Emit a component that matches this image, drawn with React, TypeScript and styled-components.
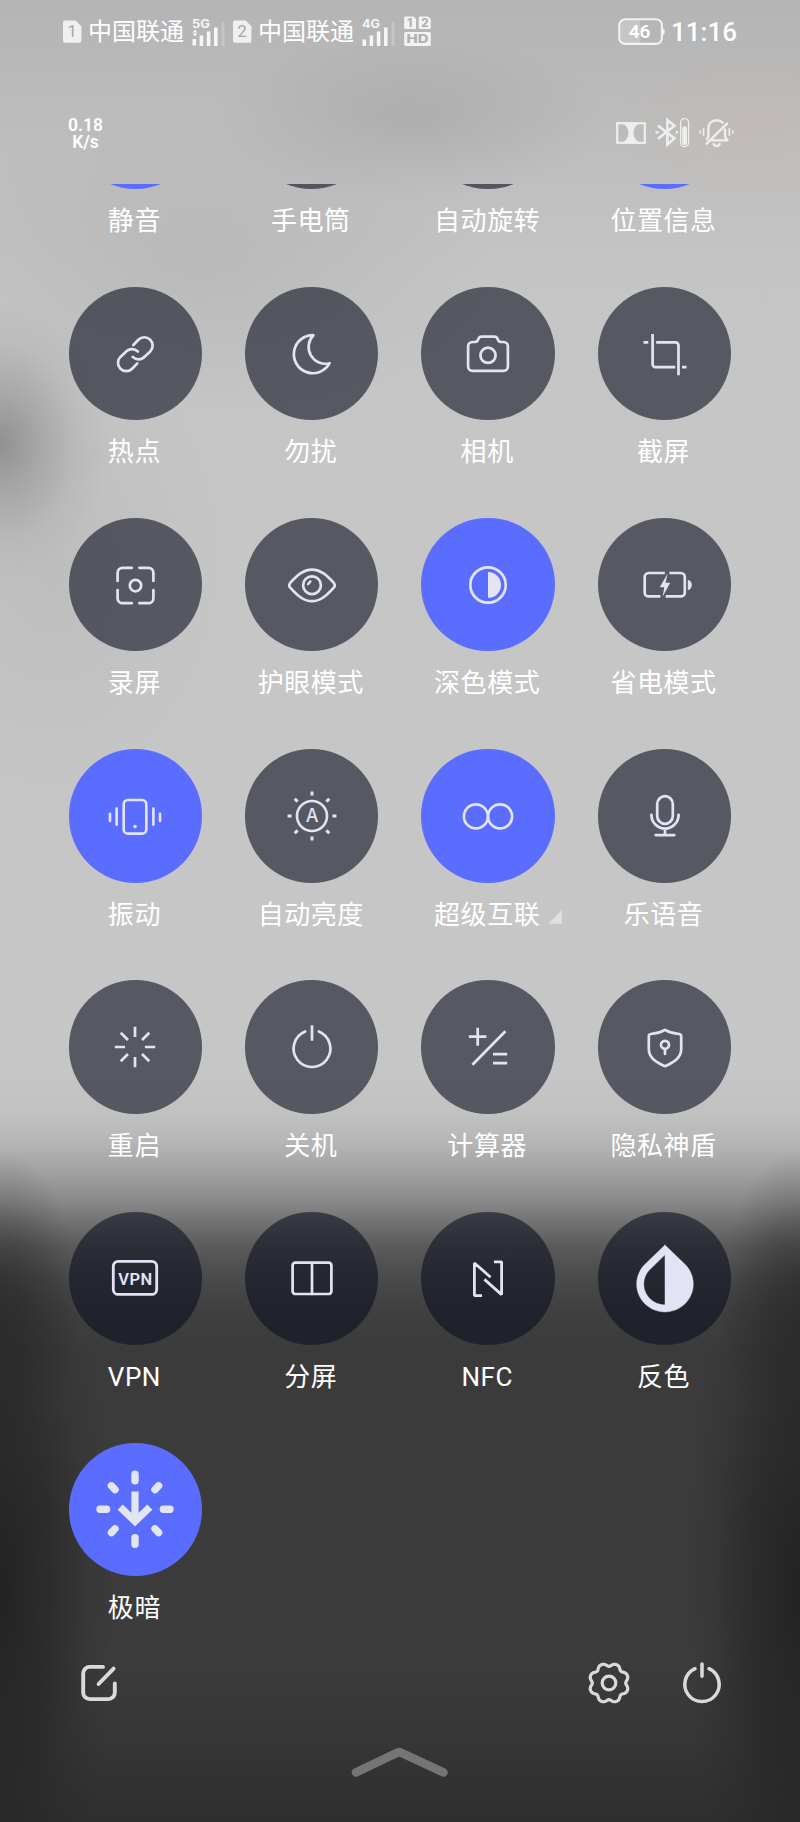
import React from 'react';
import styled, { createGlobalStyle } from 'styled-components';

const GlobalStyle = createGlobalStyle`
  * { box-sizing: border-box; }
  body { margin: 0; }
`;

const Screen = styled.main`
  display: flex;
  flex-direction: column;
  width: 800px;
  height: 1822px;
  overflow: hidden;
  color: #fff;
  font-family: Roboto, 'Noto Sans CJK SC', sans-serif;
  background:
    radial-gradient(ellipse 110px 140px at 0 442px, rgba(95, 95, 95, 0.5), rgba(110, 110, 110, 0.3) 38%, rgba(130, 130, 130, 0.1) 72%, transparent),
    radial-gradient(ellipse 200px 85px at 410px 118px, rgba(130, 130, 130, 0.24), transparent),
    radial-gradient(ellipse 300px 150px at 200px 265px, rgba(140, 140, 140, 0.2), transparent),
    radial-gradient(ellipse 180px 240px at 50px 570px, rgba(160, 160, 160, 0.22), transparent),
    radial-gradient(ellipse 150px 90px at 750px 125px, rgba(205, 180, 165, 0.22), transparent),
    radial-gradient(ellipse 115px 390px at 0 1590px, rgba(26, 26, 26, 0.75), rgba(30, 30, 30, 0.5) 45%, rgba(34, 34, 34, 0.2) 75%, transparent),
    radial-gradient(ellipse 115px 390px at 800px 1590px, rgba(26, 26, 26, 0.75), rgba(30, 30, 30, 0.5) 45%, rgba(34, 34, 34, 0.2) 75%, transparent),
    radial-gradient(ellipse 80px 150px at 0 1300px, rgba(28, 28, 28, 0.45), transparent),
    radial-gradient(ellipse 80px 150px at 800px 1300px, rgba(28, 28, 28, 0.45), transparent),
    linear-gradient(#b4b4b4, #b8b8b8 60px, #bebebe 150px, #c5c5c5 280px, #c6c6c6 700px, #c6c6c6 1070px, #c1c1c1 1115px, #b4b4b4 1145px, #9f9f9f 1175px, #8a8a8a 1200px, #6f6f6f 1225px, #5c5c5c 1245px, #4b4b4b 1275px, #404040 1310px, #3b3b3b 1350px, #3c3c3c 1660px, #363636 1740px, #2e2e2e 1822px);
`;

const StatusBar = styled.header`
  display: flex;
  align-items: center;
  height: 62px;
  padding: 1px 63px 0;
`;

const Carrier = styled.div<{ $width: number }>`
  display: flex;
  align-items: center;
  width: ${(p) => p.$width}px;
  svg { flex: none; }
`;

const CarrierName = styled.span`
  width: 96px;
  margin: 0 8px 0 6px;
  font-size: 24px;
  line-height: 30px;
  white-space: nowrap;
`;

const Clock = styled.time`
  margin-left: 6px;
  font-size: 26px;
  font-weight: 500;
  line-height: 30px;
`;

const Spacer = styled.div`
  flex: 1;
`;

const SecondaryBar = styled.div`
  display: flex;
  align-items: flex-start;
  height: 122px;
  padding: 55px 66px 0 67px;
`;

const NetSpeed = styled.div`
  width: 37px;
  font-size: 17.5px;
  font-weight: 600;
  line-height: 16.5px;
  text-align: center;
  white-space: pre-line;
`;

const Indicators = styled.div`
  display: flex;
  align-items: center;
  gap: 9px;
  opacity: 0.75;
`;

const Panel = styled.section`
  height: 1446px;
  overflow: hidden;
`;

const TileGrid = styled.div`
  display: grid;
  grid-template-columns: repeat(4, 133.4px);
  grid-auto-rows: 231.15px;
  column-gap: 43px;
  margin: -128.2px 0 0 68.7px;
`;

const Tile = styled.div`
  display: flex;
  flex-direction: column;
  align-items: center;
`;

const Disc = styled.button<{ $on?: boolean }>`
  display: flex;
  align-items: center;
  justify-content: center;
  width: 133.4px;
  height: 133.4px;
  padding: 0;
  border: 0;
  border-radius: 50%;
  color: ${(p) => (p.$on ? '#e4e5f2' : '#e3e3f6')};
  background: ${(p) => (p.$on ? '#5b6dff' : 'rgba(13, 16, 31, 0.6)')};
`;

const Label = styled.span`
  position: relative;
  margin: 13px 2px 0 0;
  font-size: 26px;
  line-height: 38px;
  letter-spacing: 0.55px;
  white-space: nowrap;
`;

const MoreMark = styled.i`
  position: absolute;
  right: -22px;
  bottom: 10px;
  width: 14px;
  height: 14px;
  background: rgba(235, 235, 235, 0.7);
  clip-path: polygon(100% 0, 100% 100%, 0 100%);
`;

const Footer = styled.footer`
  display: flex;
  align-items: center;
  height: 106px;
  padding: 0 73px 0 74px;
`;

const FooterActions = styled.div`
  display: flex;
  gap: 43px;
  margin-left: auto;
`;

const Handle = styled.div`
  display: flex;
  justify-content: center;
  padding: 8px 1px 0 0;
`;

const Glyph = ({ children, w = 2.7, size = 80 }: { children: React.ReactNode; w?: number; size?: number }) => (
  <svg width={size} height={size} viewBox={`${-size / 2} ${-size / 2} ${size} ${size}`} fill="none" stroke="currentColor" strokeWidth={w} strokeLinecap="round" strokeLinejoin="round">
    {children}
  </svg>
);

const ring = (n: number, r1: number, r2: number) =>
  Array.from({ length: n }, (_, i) => {
    const a = (i * 2 * Math.PI) / n;
    return `M${Math.cos(a) * r1} ${Math.sin(a) * r1}L${Math.cos(a) * r2} ${Math.sin(a) * r2}`;
  }).join('');

const gearPath =
  Array.from({ length: 144 }, (_, i) => {
    const a = (i * Math.PI) / 72;
    const r = 19.8 - 3.1 * Math.pow((1 + Math.cos(8 * a)) / 2, 1.5);
    return `${i ? 'L' : 'M'}${(Math.cos(a) * r).toFixed(2)} ${(Math.sin(a) * r).toFixed(2)}`;
  }).join('') + 'Z';

const icons: Record<string, React.ReactNode> = {
  link: (
    <Glyph>
      <path d="M-1.7 -9L3.4 -14.3A8.3 8.3 0 0 1 15.2 -2.5L9.9 2.4A8.3 8.3 0 0 1 -2.3 2.9" />
      <path d="M2.3 9.4L-2.8 14.7A8.3 8.3 0 0 1 -14.6 2.9L-9.3 -2A8.3 8.3 0 0 1 2.9 -2.5" />
    </Glyph>
  ),
  moon: <Glyph><path d="M1.4 -18.8A19 19 0 1 0 17.6 9.2A16.8 16.8 0 0 1 1.4 -18.8Z" /></Glyph>,
  camera: (
    <Glyph>
      <path d="M-15.5 -12H-12.6Q-11 -12 -10.3 -13.6L-9.1 -16Q-8.3 -17.4 -6.6 -17.4H6.6Q8.3 -17.4 9.1 -16L10.3 -13.6Q11 -12 12.6 -12H15.5A4.4 4.4 0 0 1 19.9 -7.6V12.4A4.4 4.4 0 0 1 15.5 16.8H-15.5A4.4 4.4 0 0 1 -19.9 12.4V-7.6A4.4 4.4 0 0 1 -15.5 -12Z" />
      <circle cx="0" cy="1.3" r="7.6" />
    </Glyph>
  ),
  crop: (
    <Glyph>
      <path strokeLinecap="butt" d="M-12.4 -20V10.2A3 3 0 0 0 -9.4 13.2H10.3M17 13.2H21.5M-21.5 -11.6H-16.7M-8.8 -11.6H10.5A3 3 0 0 1 13.5 -8.6V21.3" />
    </Glyph>
  ),
  record: (
    <Glyph>
      <path d="M-3.2 -17.2H-12.4A5 5 0 0 0 -17.4 -12.2V-4M4.4 -17.2H13.4A5 5 0 0 1 18.4 -12.2V-4M-3.2 18.2H-12.4A5 5 0 0 1 -17.4 13.2V5M4.4 18.2H13.4A5 5 0 0 0 18.4 13.2V5" />
      <circle cx="0.5" cy="0.6" r="5.7" />
    </Glyph>
  ),
  eye: (
    <Glyph>
      <path d="M-22 -1.8C-15.5 -9 -9 -15.4 0 -15.4S15.5 -9 22 -1.8Q23.6 0.3 22 2.4C15.5 9.6 9 16.2 0 16.2S-15.5 9.6 -22 2.4Q-23.6 0.3 -22 -1.8Z" />
      <circle cx="0" cy="0.2" r="8.9" />
      <path strokeWidth="2.4" d="M-4 -0.8L-1.6 -3.6" />
    </Glyph>
  ),
  contrast: (
    <Glyph>
      <circle cx="0" cy="0" r="17.7" />
      <path stroke="none" fill="currentColor" d="M0 -13A13 13 0 0 1 0 13Z" />
    </Glyph>
  ),
  battery: (
    <Glyph>
      <path strokeLinecap="butt" d="M-0.2 -12H-16.3A4 4 0 0 0 -20.3 -8V7.4A4 4 0 0 0 -16.3 11.4H-4.6M4.4 -12H15.8A4 4 0 0 1 19.8 -8V7.4A4 4 0 0 1 15.8 11.4H0.6" />
      <path stroke="none" fill="currentColor" d="M22.8 -5.2Q26.8 -4 26.8 0T22.8 5.2ZM2.6 -11.5L-5.2 2.3H-0.7L-2.4 11.8L5.2 -2.2H0.6Z" />
    </Glyph>
  ),
  vibrate: (
    <Glyph w={2.6}>
      <rect x="-11.3" y="-16" width="22.6" height="33.6" rx="4.2" />
      <path d="M-18.4 -7.4V8.8M18.4 -7.4V8.8M-25 -2.2V5M25 -2.2V5" />
      <circle cx="0" cy="10.6" r="1.8" fill="currentColor" stroke="none" />
    </Glyph>
  ),
  brightness: (
    <Glyph w={2.6}>
      <circle cx="0" cy="0" r="15" />
      <path strokeLinecap="butt" strokeWidth="3" d={ring(8, 20.4, 24.4)} />
      <text x="0" y="6.4" fill="currentColor" stroke="none" fontFamily="Inter, sans-serif" fontSize="18" fontWeight="500" textAnchor="middle">A</text>
    </Glyph>
  ),
  infinity: <Glyph w={2.6}><circle cx="-12.1" cy="0.4" r="12" /><circle cx="12.1" cy="0.4" r="12" /></Glyph>,
  mic: (
    <Glyph>
      <rect x="-7.8" y="-19.8" width="15.6" height="27.6" rx="7.8" />
      <path d="M-13.6 -1.2A13.6 13.8 0 0 0 13.6 -1.2M0 12.8V19M-9.3 19.1H9.3" />
    </Glyph>
  ),
  restart: <Glyph><path strokeLinecap="butt" d={ring(8, 9.9, 20.2)} /></Glyph>,
  power: <Glyph><path d="M-6.8 -15.5A18.4 18.4 0 1 0 6.8 -15.5" /><path strokeLinecap="butt" d="M0 -21.7V-6.3" /></Glyph>,
  calculator: <Glyph><path strokeLinecap="butt" d="M-19.2 -10.3H-1.6M-10.3 -19.2V-1.3M17.4 -15.7L-15.6 17.7M5 7.2H19.2M5 16.1H19.2" /></Glyph>,
  shield: (
    <Glyph>
      <path d="M0 -17.2C4.5 -14.6 9.5 -13.4 14.2 -13Q16.2 -12.7 16.2 -10.7V2C16.2 10.6 9.5 15 0 19.2C-9.5 15 -16.2 10.6 -16.2 2V-10.7Q-16.2 -12.7 -14.2 -13C-9.5 -13.4 -4.5 -14.6 0 -17.2Z" />
      <circle cx="0" cy="-2.2" r="4" />
      <path d="M0 2V7" />
    </Glyph>
  ),
  vpn: (
    <Glyph w={2.8}>
      <rect x="-21.7" y="-16.6" width="43.4" height="33" rx="5" />
      <text x="0.2" y="6.7" fill="currentColor" stroke="none" fontFamily="Roboto, sans-serif" fontSize="16.5" fontWeight="600" textAnchor="middle" textLength="34">VPN</text>
    </Glyph>
  ),
  split: <Glyph><rect x="-19.4" y="-15.4" width="38.8" height="31.4" rx="2.8" /><path d="M0 -15V16" /></Glyph>,
  nfc: <Glyph w={2.8}><path strokeLinecap="butt" strokeLinejoin="bevel" d="M-6 17.6H-13.6V-15L2.6 -0.8M6 -16.2H13.6V16.6L-3.6 1.4" /></Glyph>,
  invert: (
    <Glyph>
      <path transform="translate(-42.5 -40.4) scale(3.54)" fill="currentColor" fillRule="evenodd" stroke="currentColor" strokeWidth="0.12" d="M12 4.81V19c-3.31 0-6-2.63-6-5.87 0-1.56.62-3.03 1.75-4.14L12 4.81M12 2.1 6.35 7.56C4.9 8.99 4 10.96 4 13.13 4 17.48 7.58 21 12 21s8-3.52 8-7.87c0-2.17-.9-4.14-2.35-5.57L12 2.1z" />
    </Glyph>
  ),
  dim: (
    <Glyph w={7.4}>
      <path d="M0 -34.8V-28.2M0 28.6V35.2M-35 0.2H-28.4M28.4 0.2H35M-23.6 -23.2L-20 -19.4M23.6 -23.2L20 -19.4M-23.6 23.6L-20 19.8M23.6 23.6L20 19.8" />
      <path strokeLinecap="butt" strokeLinejoin="miter" strokeWidth="7.2" d="M0 -17.4V11M-14.8 -1.9L0 12.4L14.8 -1.9" />
    </Glyph>
  ),
};

type TileData = { label: string; icon?: string; on?: boolean; more?: boolean };

const tiles: TileData[] = [
  { label: '静音', on: true },
  { label: '手电筒' },
  { label: '自动旋转' },
  { label: '位置信息', on: true },
  { label: '热点', icon: 'link' },
  { label: '勿扰', icon: 'moon' },
  { label: '相机', icon: 'camera' },
  { label: '截屏', icon: 'crop' },
  { label: '录屏', icon: 'record' },
  { label: '护眼模式', icon: 'eye' },
  { label: '深色模式', icon: 'contrast', on: true },
  { label: '省电模式', icon: 'battery' },
  { label: '振动', icon: 'vibrate', on: true },
  { label: '自动亮度', icon: 'brightness' },
  { label: '超级互联', icon: 'infinity', on: true, more: true },
  { label: '乐语音', icon: 'mic' },
  { label: '重启', icon: 'restart' },
  { label: '关机', icon: 'power' },
  { label: '计算器', icon: 'calculator' },
  { label: '隐私神盾', icon: 'shield' },
  { label: 'VPN', icon: 'vpn' },
  { label: '分屏', icon: 'split' },
  { label: 'NFC', icon: 'nfc' },
  { label: '反色', icon: 'invert' },
  { label: '极暗', icon: 'dim', on: true },
];

const Sim = ({ n }: { n: number }) => (
  <svg width="19" height="24" viewBox="0 0 19 24">
    <path fill="#f0f0f0" d="M2 0.5H12.6L18.4 6.3V20.8A2 2 0 0 1 16.4 22.8H2A2 2 0 0 1 0 20.8V2.5A2 2 0 0 1 2 0.5Z" />
    <text x="9.2" y="17.4" fill="#a6a6a6" fontSize="16.5" fontFamily="Roboto, sans-serif" textAnchor="middle">{n}</text>
  </svg>
);

const Signal = ({ type, data }: { type: string; data?: boolean }) => (
  <svg width="34" height="30" viewBox="0 0 34 30" fill="#f6f6f6">
    <text x="0" y="10.6" fontSize="11.5" fontWeight="700" fontFamily="Inter, sans-serif" textLength="18" lengthAdjust="spacingAndGlyphs">{type}</text>
    {data && <path d="M0.6 15.6L3 12.6L5.4 15.6ZM0.6 16.6L3 19.4L5.4 16.6Z" />}
    <path d={`M0.5 ${data ? 22 : 22.5}h3.6v6.5H0.5ZM7.6 18.5h3.6V29H7.6ZM14.8 14.6h3.6V29h-3.6ZM22 10.6h3.6V29H22Z`} />
    <path opacity="0.25" d="M29.6 5h3V29h-3Z" />
  </svg>
);

const HdBadge = () => (
  <svg width="28" height="31" viewBox="0 0 28 31" fontFamily="Inter, sans-serif" fontWeight="800" textAnchor="middle">
    <path fill="#f2f2f2" d="M1.5 0.5H9.4L12 3V13H1.5A1.3 1.3 0 0 1 0.2 11.7V1.8A1.3 1.3 0 0 1 1.5 0.5ZM16 0.5H24L26.8 3V11.7A1.3 1.3 0 0 1 25.5 13H14.7V1.8A1.3 1.3 0 0 1 16 0.5Z" />
    <rect x="0.2" y="16" width="26.6" height="14" rx="1.5" fill="#f2f2f2" />
    <g fill="#b0b0b0">
      <text x="5.8" y="11" fontSize="11.5">1</text>
      <text x="20.8" y="11" fontSize="11.5">2</text>
      <text x="13.5" y="27.2" fontSize="11.5" textLength="22" lengthAdjust="spacingAndGlyphs">HD</text>
    </g>
  </svg>
);

const BatteryLevel = () => (
  <svg width="47" height="28" viewBox="0 0 47 28">
    <rect x="2.5" y="2" width="20" height="23.5" rx="4" fill="#fff" opacity="0.22" />
    <rect x="1.3" y="1.3" width="42.6" height="24.6" rx="6" fill="none" stroke="#f2f2f2" strokeWidth="2.1" />
    <path d="M44.7 10Q46.8 11 46.8 13.7T44.7 17.4Z" fill="#f2f2f2" />
    <text x="21.6" y="20" fill="#fff" fontSize="19" fontWeight="600" fontFamily="Roboto, sans-serif" textAnchor="middle">46</text>
  </svg>
);

const Dolby = () => (
  <svg width="30" height="22" viewBox="0 0 30 22">
    <rect x="1.2" y="1.2" width="27.6" height="19.6" fill="none" stroke="#fff" strokeWidth="2.2" />
    <path fill="#fff" d="M7.5 2H22.5Q17.6 5 17.6 11T22.5 20H7.5Q12.4 17 12.4 11T7.5 2Z" />
  </svg>
);

const Bluetooth = () => (
  <svg width="35" height="31" viewBox="0 0 35 31" fill="none" stroke="#fff" strokeWidth="2.6">
    <path d="M3 8.6L19.5 21.4L12.4 27.4V3.2L19.5 8.8L3 21.8" />
    <path d="M0.5 15.3H3.6M20.6 15.3H23" />
    <rect x="25.6" y="1.6" width="8" height="28" rx="4" strokeWidth="1.3" />
    <rect x="27.2" y="9.5" width="4.8" height="18.4" rx="2" fill="#fff" stroke="none" />
  </svg>
);

const BellOff = () => (
  <svg width="35" height="31" viewBox="0 0 35 31" fill="none" stroke="#fff" strokeWidth="2.4" strokeLinecap="round" strokeLinejoin="round">
    <path d="M12 23.4H28.4L26 19.6V12.4M8 22.2L9.4 19.8V11.8C9.4 6.2 12.8 3.2 17.6 3.2C20 3.2 22 4 23.6 5.6" />
    <path d="M28 6.6L7.6 26.6M14.4 27A3.6 3.6 0 0 0 20.8 27" />
    <path strokeWidth="1.7" d="M4.6 11.8V18.2M1.2 14V16M30.4 11.8V18.2M33.8 14V16" />
  </svg>
);

export default function App() {
  return (
    <Screen>
      <GlobalStyle />
      <StatusBar>
        <Carrier $width={170}>
          <Sim n={1} />
          <CarrierName>中国联通</CarrierName>
          <Signal type="5G" data />
        </Carrier>
        <Carrier $width={171}>
          <Sim n={2} />
          <CarrierName>中国联通</CarrierName>
          <Signal type="4G" />
        </Carrier>
        <HdBadge />
        <Spacer />
        <BatteryLevel />
        <Clock>11:16</Clock>
      </StatusBar>
      <SecondaryBar>
        <NetSpeed>{'0.18\nK/s'}</NetSpeed>
        <Spacer />
        <Indicators>
          <Dolby />
          <Bluetooth />
          <BellOff />
        </Indicators>
      </SecondaryBar>
      <Panel>
        <TileGrid>
          {tiles.map((t) => (
            <Tile key={t.label}>
              <Disc $on={t.on} aria-label={t.label}>{t.icon && icons[t.icon]}</Disc>
              <Label>
                {t.label}
                {t.more && <MoreMark />}
              </Label>
            </Tile>
          ))}
        </TileGrid>
      </Panel>
      <Footer>
        <Glyph w={3.9} size={50}>
          <path d="M4 -16.1H-9.4A6.4 6.4 0 0 0 -15.8 -9.7V9.7A6.4 6.4 0 0 0 -9.4 16.1H9.4A6.4 6.4 0 0 0 15.8 9.7V0.4M-0.4 1L14.6 -14.4" stroke="#dadada" />
        </Glyph>
        <FooterActions>
          <Glyph w={3.2} size={50}>
            <path d={gearPath} stroke="#dadada" />
            <circle r="6.8" stroke="#dadada" />
          </Glyph>
          <Glyph w={3.5} size={50}>
            <path d="M-7 -14.3A17.2 17.2 0 1 0 7 -14.3M0 -19V-6.8" stroke="#dadada" />
          </Glyph>
        </FooterActions>
      </Footer>
      <Handle>
        <svg width="98" height="34" viewBox="0 0 98 34" fill="none" stroke="#757575" strokeWidth="8.6" strokeLinecap="round" strokeLinejoin="round">
          <path d="M5 28.4L47 8.4Q48.2 7.8 49.4 8.4L92.4 28.4" />
        </svg>
      </Handle>
    </Screen>
  );
}
